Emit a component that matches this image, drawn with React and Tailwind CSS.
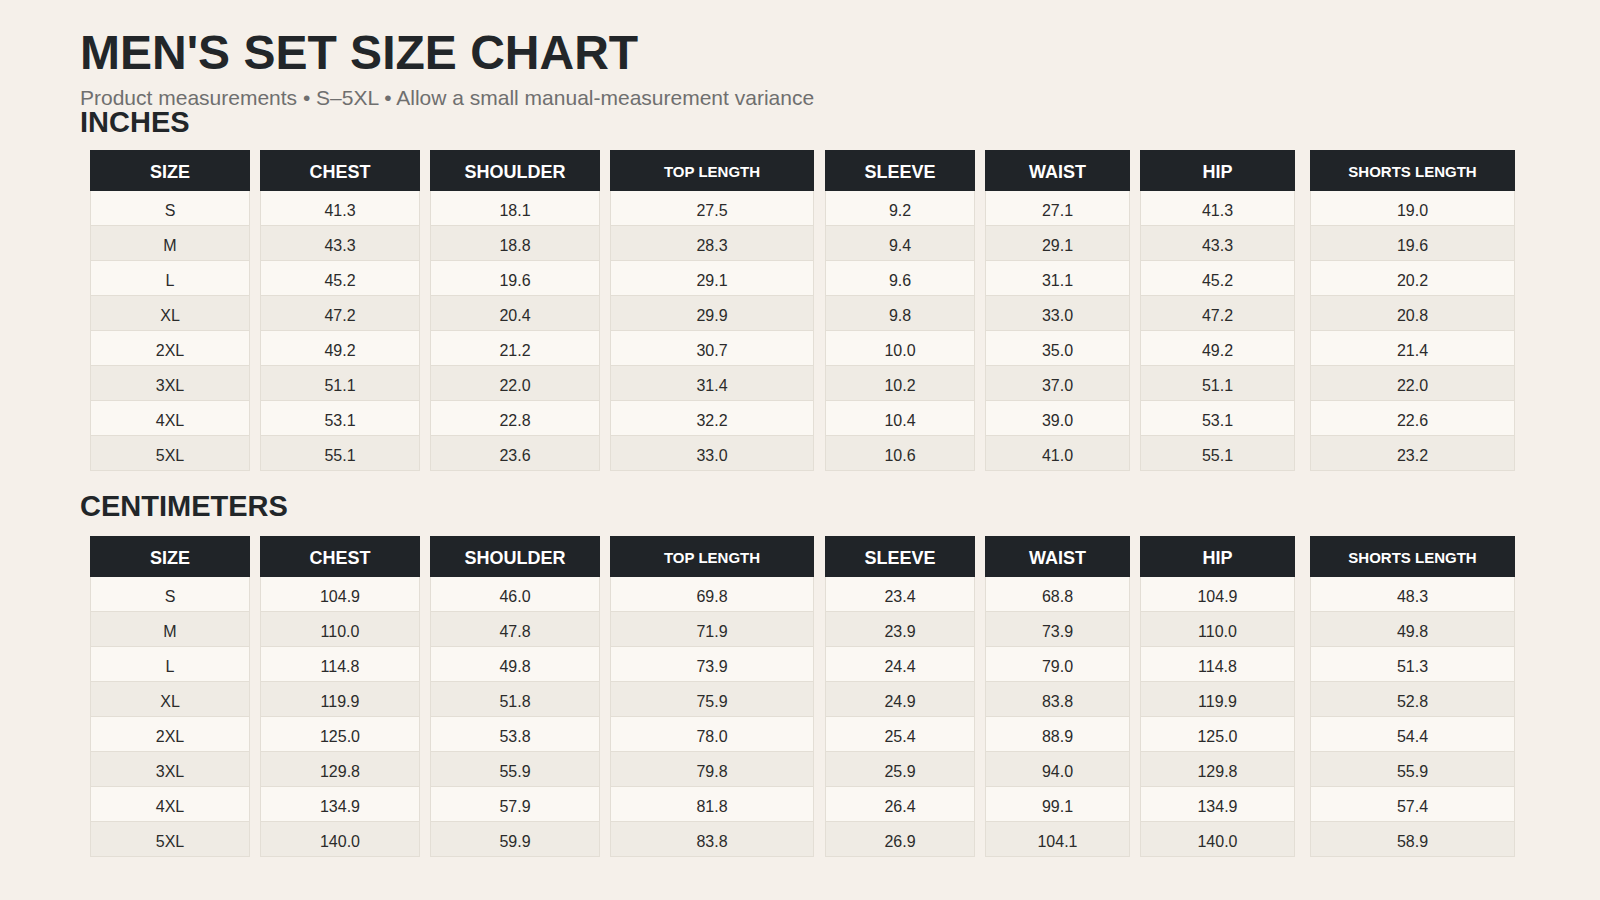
import React from "react";

const COLS = [
  { key: "size", label: "SIZE", w: "w-[160px]", small: false },
  { key: "chest", label: "CHEST", w: "w-[160px]", small: false },
  { key: "shoulder", label: "SHOULDER", w: "w-[170px]", small: false },
  { key: "top", label: "TOP LENGTH", w: "w-[204px]", small: true },
  { key: "sleeve", label: "SLEEVE", w: "w-[150px] ml-[1px]", small: false },
  { key: "waist", label: "WAIST", w: "w-[145px]", small: false },
  { key: "hip", label: "HIP", w: "w-[155px]", small: false },
  { key: "shorts", label: "SHORTS LENGTH", w: "w-[205px] ml-[5px]", small: true },
];

const SIZES = ["S", "M", "L", "XL", "2XL", "3XL", "4XL", "5XL"];

// valores por columna (sin la talla)
const INCHES = [
  ["41.3", "18.1", "27.5", "9.2", "27.1", "41.3", "19.0"],
  ["43.3", "18.8", "28.3", "9.4", "29.1", "43.3", "19.6"],
  ["45.2", "19.6", "29.1", "9.6", "31.1", "45.2", "20.2"],
  ["47.2", "20.4", "29.9", "9.8", "33.0", "47.2", "20.8"],
  ["49.2", "21.2", "30.7", "10.0", "35.0", "49.2", "21.4"],
  ["51.1", "22.0", "31.4", "10.2", "37.0", "51.1", "22.0"],
  ["53.1", "22.8", "32.2", "10.4", "39.0", "53.1", "22.6"],
  ["55.1", "23.6", "33.0", "10.6", "41.0", "55.1", "23.2"],
];

const CM = [
  ["104.9", "46.0", "69.8", "23.4", "68.8", "104.9", "48.3"],
  ["110.0", "47.8", "71.9", "23.9", "73.9", "110.0", "49.8"],
  ["114.8", "49.8", "73.9", "24.4", "79.0", "114.8", "51.3"],
  ["119.9", "51.8", "75.9", "24.9", "83.8", "119.9", "52.8"],
  ["125.0", "53.8", "78.0", "25.4", "88.9", "125.0", "54.4"],
  ["129.8", "55.9", "79.8", "25.9", "94.0", "129.8", "55.9"],
  ["134.9", "57.9", "81.8", "26.4", "99.1", "134.9", "57.4"],
  ["140.0", "59.9", "83.8", "26.9", "104.1", "140.0", "58.9"],
];

function SizeTable({ data }) {
  return (
    <div className="ml-[10px] flex gap-[10px]">
      {COLS.map((c, ci) => (
        <div key={c.key} className={`${c.w} flex flex-col`}>
          <div
            className={`h-[41px] pt-[3px] flex items-center justify-center bg-[#202428] text-white font-bold ${
              c.small ? "text-[15px]" : "text-[18px]"
            }`}
          >
            {c.label}
          </div>
          {SIZES.map((s, ri) => (
            <div
              key={s}
              className={`h-[35px] pt-[5px] flex items-center justify-center border-x border-b border-[#e3ded5] text-[16px] text-[#2b2b2b] ${
                ri % 2 === 0 ? "bg-[#fbf8f3]" : "bg-[#efebe4]"
              }`}
            >
              {ci === 0 ? s : data[ri][ci - 1]}
            </div>
          ))}
        </div>
      ))}
    </div>
  );
}

export default function App() {
  return (
    <div
      className="min-h-screen bg-[#f5f0ea] px-[80px] pt-[29px] pb-10"
      style={{ fontFamily: '"Liberation Sans", Arial, sans-serif' }}
    >
      <h1 className="text-[48px] leading-none font-bold text-[#222629]">
        MEN'S SET SIZE CHART
      </h1>
      <p className="mt-[10px] text-[21px] leading-none text-[#6f6f6f]">
        Product measurements • S–5XL • Allow a small manual-measurement variance
      </p>

      <h2 className="text-[29px] leading-none font-bold text-[#222629]">INCHES</h2>
      <div className="mt-[13px]">
        <SizeTable data={INCHES} />
      </div>

      <h2 className="mt-[21px] text-[29px] leading-none font-bold text-[#222629]">
        CENTIMETERS
      </h2>
      <div className="mt-[15px]">
        <SizeTable data={CM} />
      </div>
    </div>
  );
}
